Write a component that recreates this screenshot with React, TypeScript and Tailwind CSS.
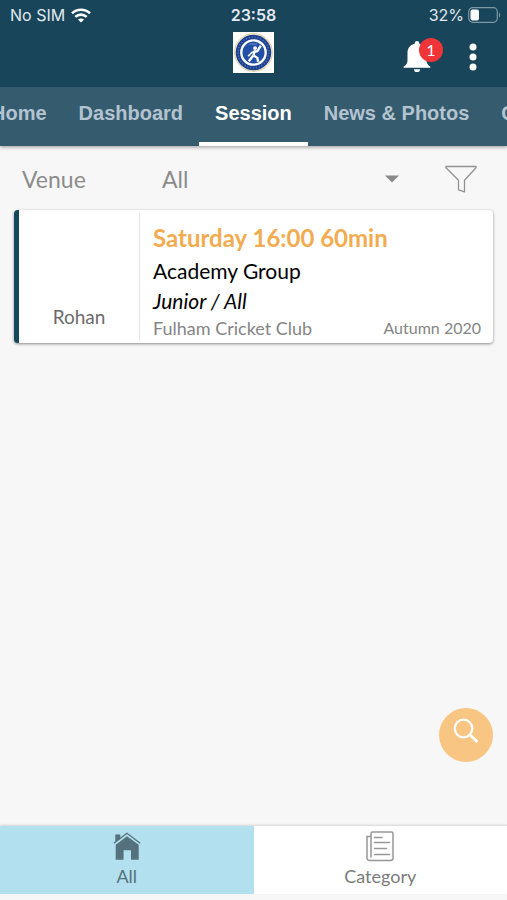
import { useEffect, useLayoutEffect, useRef, useState } from "react";
import clsx from "clsx";

const tabs = ["Home", "Dashboard", "Session", "News & Photos", "Club"];

const sessions = [
  {
    coach: "Rohan",
    time: "Saturday 16:00 60min",
    group: "Academy Group",
    level: "Junior / All",
    venue: "Fulham Cricket Club",
    term: "Autumn 2020",
  },
];

function StatusBar() {
  return (
    <div className="grid h-7 grid-cols-3 items-center px-2.5 pt-0.5 font-['Inter',sans-serif] text-base leading-6 text-slate-200">
      <div className="flex items-center gap-1.5">
        <span>No SIM</span>
        <svg viewBox="0 0 20 15" className="h-[15px] w-5 text-white" aria-hidden="true">
          <g fill="none" stroke="currentColor" strokeWidth="2.6">
            <path d="M1 5.3C6 .6 14 .6 19 5.3" />
            <path d="M4.3 8.9c3.3-3 8.1-3 11.4 0" />
          </g>
          <path fill="currentColor" d="M10 14.6 6.9 11.5c1.8-1.5 4.4-1.5 6.2 0z" />
        </svg>
      </div>
      <span className="text-center font-semibold">23:58</span>
      <div className="-mr-1 flex items-center justify-end gap-1">
        <span>32%</span>
        <svg viewBox="0 0 33 16" className="h-4 w-[33px]" aria-hidden="true">
          <rect x=".7" y=".7" width="28.6" height="14.6" rx="4" fill="none" stroke="#7e98a5" strokeWidth="1.2" />
          <rect x="2.5" y="2.5" width="8.5" height="11" rx="2" fill="#fff" />
          <path d="M31 5.5c1.5.7 1.5 4.3 0 5z" fill="#7e98a5" />
        </svg>
      </div>
    </div>
  );
}

function ClubLogo() {
  return (
    <svg viewBox="0 0 42 42" className="size-[41px]" role="img" aria-label="Club logo">
      <rect width="42" height="42" fill="#fff" />
      <circle cx="21" cy="21" r="19.3" fill="#f6f1df" stroke="#d9c48c" strokeWidth=".9" />
      <circle cx="21" cy="21" r="18.2" fill="#1d4291" />
      <circle cx="21" cy="21" r="15.8" fill="none" stroke="#4f70b3" strokeWidth="1.5" strokeDasharray="1.2 1.8" />
      <circle cx="21" cy="21" r="12.5" fill="#2250a6" stroke="#fff" strokeWidth="2.4" />
      <path d="M17 12.5h8" stroke="#8ba3d1" strokeWidth="1.2" strokeDasharray="1.2 .8" />
      <circle cx="22.6" cy="16.5" r="2" fill="#fff" />
      <path
        d="m28.5 14-3.5 5.5-5 1.5M22.5 18.5l-1.7 5.7M20.5 24.3l-4.3 5.7M21.5 24.3l3.5 2.2.7 4"
        fill="none"
        stroke="#fff"
        strokeWidth="2.4"
        strokeLinejoin="round"
      />
      <path d="m20 20.2-4.6 4.6" stroke="#fff" strokeWidth="1.6" />
    </svg>
  );
}

function AppBar() {
  return (
    <div className="grid grid-cols-3 items-start px-6 pt-1 pb-3.5">
      <div />
      <div className="flex justify-center">
        <ClubLogo />
      </div>
      <div className="flex items-start justify-end gap-5 pt-1.5">
        <button type="button" aria-label="Notifications" className="flex">
          <svg viewBox="0 0 28 32" className="mt-[3px] h-8 w-7 text-white" fill="currentColor" aria-hidden="true">
            <path d="M14 0a2.3 2.3 0 0 0-2.3 2.3v.5C7 3.9 4.5 7.5 4.5 12v7.5c0 2.7-1.3 4.5-3.9 6.2v1.1h26.8v-1.1c-2.6-1.7-3.9-3.5-3.9-6.2V12c0-4.5-2.5-8.1-7.2-9.2v-.5A2.3 2.3 0 0 0 14 0zM11 28.2h6a3 2.9 0 0 1-6 0z" />
          </svg>
          <span className="-ml-3 flex size-6 items-center justify-center rounded-full bg-[#ef3538] font-['Lato',sans-serif] text-base leading-5 text-white">
            1
          </span>
        </button>
        <button type="button" aria-label="More options" className="pt-[5px]">
          <svg viewBox="0 0 20 28" className="h-7 w-5" fill="#fff" aria-hidden="true">
            <circle cx="10" cy="4" r="3.5" />
            <circle cx="10" cy="14" r="3.5" />
            <circle cx="10" cy="24" r="3.5" />
          </svg>
        </button>
      </div>
    </div>
  );
}

function TabBar() {
  const [active, setActive] = useState("Session");
  const barRef = useRef<HTMLElement>(null);

  // keep the active tab centred in the scrolling bar
  const centre = () => {
    const bar = barRef.current;
    const tab = bar?.querySelector<HTMLElement>("[aria-current]");
    if (!bar || !tab) return;
    bar.scrollLeft = tab.offsetLeft + tab.offsetWidth / 2 - bar.clientWidth / 2;
  };

  useLayoutEffect(centre, [active]);

  useEffect(() => {
    document.fonts?.ready.then(centre);
    window.addEventListener("resize", centre);
    return () => window.removeEventListener("resize", centre);
  }, []);

  return (
    <nav
      ref={barRef}
      className="relative flex overflow-x-auto bg-[#355b6f] font-['Liberation_Sans',sans-serif] text-xl leading-6 font-bold [scrollbar-width:none]"
    >
      {tabs.map((tab) => (
        <button
          key={tab}
          type="button"
          aria-current={tab === active ? "page" : undefined}
          onClick={() => setActive(tab)}
          className={clsx(
            "shrink-0 border-b-4 px-4 pt-3.5 pb-[17px] whitespace-nowrap",
            tab === active ? "border-white text-white" : "border-transparent text-[#b3c4d0]"
          )}
        >
          {tab}
        </button>
      ))}
    </nav>
  );
}

function VenueFilter() {
  return (
    <div className="flex items-center px-[22px] pt-[17px] pb-[15px] text-[23px] leading-8 text-[#8c8c8c]">
      <label htmlFor="venue" className="w-[140px] shrink-0">
        Venue
      </label>
      <div className="grid flex-1 items-center">
        <select id="venue" className="col-start-1 row-start-1 w-full appearance-none bg-transparent">
          <option>All</option>
          <option>Fulham Cricket Club</option>
        </select>
        <svg
          viewBox="0 0 14 8"
          className="pointer-events-none col-start-1 row-start-1 h-2 w-3.5 justify-self-end"
          fill="#8a8a8a"
          aria-hidden="true"
        >
          <path d="M0 .5h14L7 7.5z" />
        </svg>
      </div>
      <button type="button" aria-label="Filter" className="mr-2 ml-[46px]">
        <svg viewBox="0 0 32 28" className="h-7 w-8" fill="none" stroke="#929292" strokeWidth="1.3" aria-hidden="true">
          <path d="M1 1.5h30v1.2L19.5 15.2v11.6l-6-2V15.2L1 2.7z" strokeLinejoin="round" />
        </svg>
      </button>
    </div>
  );
}

function SessionCard({ session }: { session: (typeof sessions)[number] }) {
  return (
    <article className="mx-3.5 flex rounded border-l-[5px] border-[#14485c] bg-white shadow-[0_1px_3px_rgba(0,0,0,0.45)]">
      <div className="my-0.5 flex w-[121px] shrink-0 items-end justify-center border-r border-gray-200 pb-3 text-[19px] leading-6 text-[#6b6b6b]">
        {session.coach}
      </div>
      <div className="flex-1 pt-3 pr-3 pb-[3px] pl-[13px]">
        <h2 className="mb-0.5 text-2xl leading-8 font-bold text-[#f2ab4f]">{session.time}</h2>
        <p className="text-[21px] leading-[30px] text-black">{session.group}</p>
        <p className="text-[21px] leading-[30px] text-black italic">{session.level}</p>
        <div className="flex items-center justify-between text-[#858585]">
          <span className="text-lg leading-6">{session.venue}</span>
          <span className="text-base leading-6">{session.term}</span>
        </div>
      </div>
    </article>
  );
}

function BottomNav() {
  return (
    <nav className="mb-1.5 grid grid-cols-2 bg-white text-lg leading-6 text-[#7b7b7b] shadow-[0_-1px_2px_rgba(0,0,0,0.15)]">
      <button type="button" className="flex flex-col items-center gap-0.5 bg-[#b3e0ee] pt-1 pb-1.5 text-[#55717d]">
        <svg viewBox="0 0 28 32" className="h-8 w-7" aria-hidden="true">
          <path fill="currentColor" d="M2.3 4.5h5v4l-5 4zM14 6.3 2.7 14.8v14.9h7.9v-9.5H18v9.5h7.7V14.8z" />
          <path d="M.8 13.2 14 3.2l13.2 10" fill="none" stroke="currentColor" strokeWidth="1.3" />
        </svg>
        All
      </button>
      <button type="button" className="flex flex-col items-center gap-0.5 pt-1 pb-1.5">
        <svg
          viewBox="0 0 28 32"
          className="h-8 w-7"
          fill="none"
          stroke="#979797"
          strokeWidth="1.5"
          strokeLinecap="round"
          aria-hidden="true"
        >
          <path d="M4 6.5H1V28a2.5 2.5 0 0 0 2.5 2.5h21A2.5 2.5 0 0 0 27 28V3.5A1.5 1.5 0 0 0 25.5 2h-19A1.5 1.5 0 0 0 5 3.5V27" />
          <path d="M8.5 7.5H16M8.5 12.5h15M8.5 18.5h12M8.5 24.5h15" />
        </svg>
        Category
      </button>
    </nav>
  );
}

export default function App() {
  return (
    <div className="flex min-h-screen flex-col bg-[#f7f7f7] font-['Lato',sans-serif]">
      <header className="bg-[#18455a] shadow-[0_1px_4px_rgba(0,0,0,0.4)]">
        <StatusBar />
        <AppBar />
        <TabBar />
      </header>

      <main className="flex flex-1 flex-col">
        <VenueFilter />
        {sessions.map((session) => (
          <SessionCard key={session.time} session={session} />
        ))}
      </main>

      <div className="sticky bottom-0">
        <button
          type="button"
          aria-label="Search"
          className="mr-3.5 mb-16 ml-auto flex size-[54px] items-center justify-center rounded-full bg-[#f8c583]"
        >
          <svg viewBox="0 0 26 26" className="mb-2 size-[26px]" fill="none" stroke="#fff" strokeWidth="2.2" aria-hidden="true">
            <circle cx="10.5" cy="10.5" r="8.8" />
            <path d="m17 17 7.5 7" strokeWidth="3" />
          </svg>
        </button>
        <BottomNav />
      </div>
    </div>
  );
}
